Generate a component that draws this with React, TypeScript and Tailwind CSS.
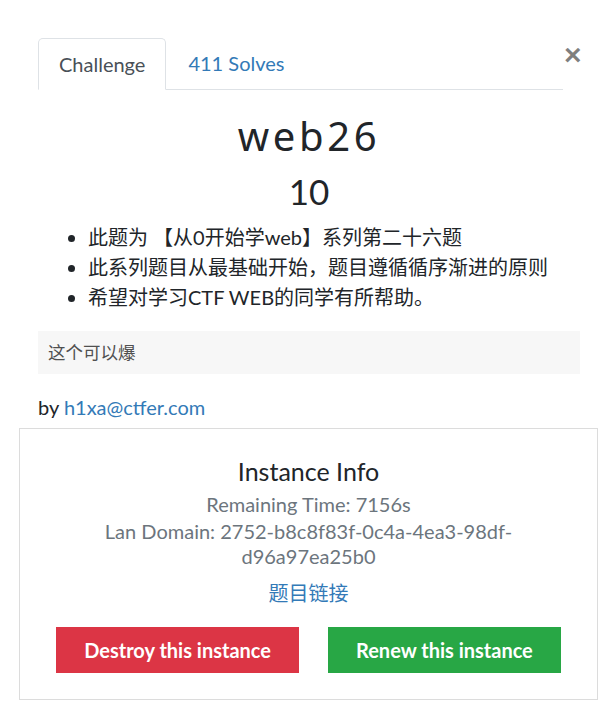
export default function App() {
  const font = { fontFamily: "Lato, 'Noto Sans CJK SC', sans-serif" };
  return (
    <div className="min-h-[706px] w-[616px] bg-white pl-[38px] pr-[36px] pt-[38px] text-[20px] leading-[30px] text-[#212529]" style={font}>
      {/* tabs header */}
      <div className="flex items-start">
        <div className="flex flex-1 border-b border-[#dee2e6]">
          <div className="-mb-px rounded-t-[5px] border border-[#dee2e6] border-b-white bg-white px-5 py-[10px] text-[#495057]">
            Challenge
          </div>
          <div className="px-[22px] py-[10px] text-[#337ab7]">411 Solves</div>
        </div>
        <div className="ml-[1px] mt-[2px] w-[16px] text-[30px] font-bold leading-none text-black/50" style={{ fontFamily: "'Liberation Sans', sans-serif" }}>
          ×
        </div>
      </div>

      <h2 className="mt-[22px] text-center text-[40px] leading-[48px] tracking-[0.09em]" style={{ fontFamily: "'Noto Sans', sans-serif" }}>
        web26
      </h2>
      <h3 className="mt-[10px] text-center text-[35px] leading-[42px]">10</h3>

      <ul className="mt-[10px] list-disc pl-[50px]">
        <li>此题为 【从0开始学web】系列第二十六题</li>
        <li>此系列题目从最基础开始，题目遵循循序渐进的原则</li>
        <li>希望对学习CTF WEB的同学有所帮助。</li>
      </ul>

      <div className="mt-[19px] bg-[#f7f7f7] px-[10px] py-[8px] text-[17.5px] leading-[27px] text-[#505050]">这个可以爆</div>

      <p className="mt-[18px]">
        by <span className="text-[#337ab7]">h1xa@ctfer.com</span>
      </p>

      {/* instance card */}
      <div className="-ml-[19px] -mr-[18px] mt-[6px] border border-[#dcdcdc] px-5 pb-[26px] pt-[27px] text-center">
        <h5 className="text-[25px] leading-[30px]">Instance Info</h5>
        <p className="mt-[6px] text-[20px] leading-[25px] text-[#6c757d]">Remaining Time: 7156s</p>
        <p className="mx-auto mt-[2px] max-w-[420px] text-[20px] leading-[25px] text-[#6c757d]">
          Lan Domain: 2752-b8c8f83f-0c4a-4ea3-98df-d96a97ea25b0
        </p>
        <p className="mt-[9px] text-[#337ab7]">题目链接</p>
        <div className="mt-[19px] flex justify-center gap-[29px]">
          <button className="bg-[#dc3545] px-[28px] py-[8px] text-[20px] font-bold leading-[30px] text-white">Destroy this instance</button>
          <button className="bg-[#28a745] px-[28px] py-[8px] text-[20px] font-bold leading-[30px] text-white">Renew this instance</button>
        </div>
      </div>
    </div>
  );
}
